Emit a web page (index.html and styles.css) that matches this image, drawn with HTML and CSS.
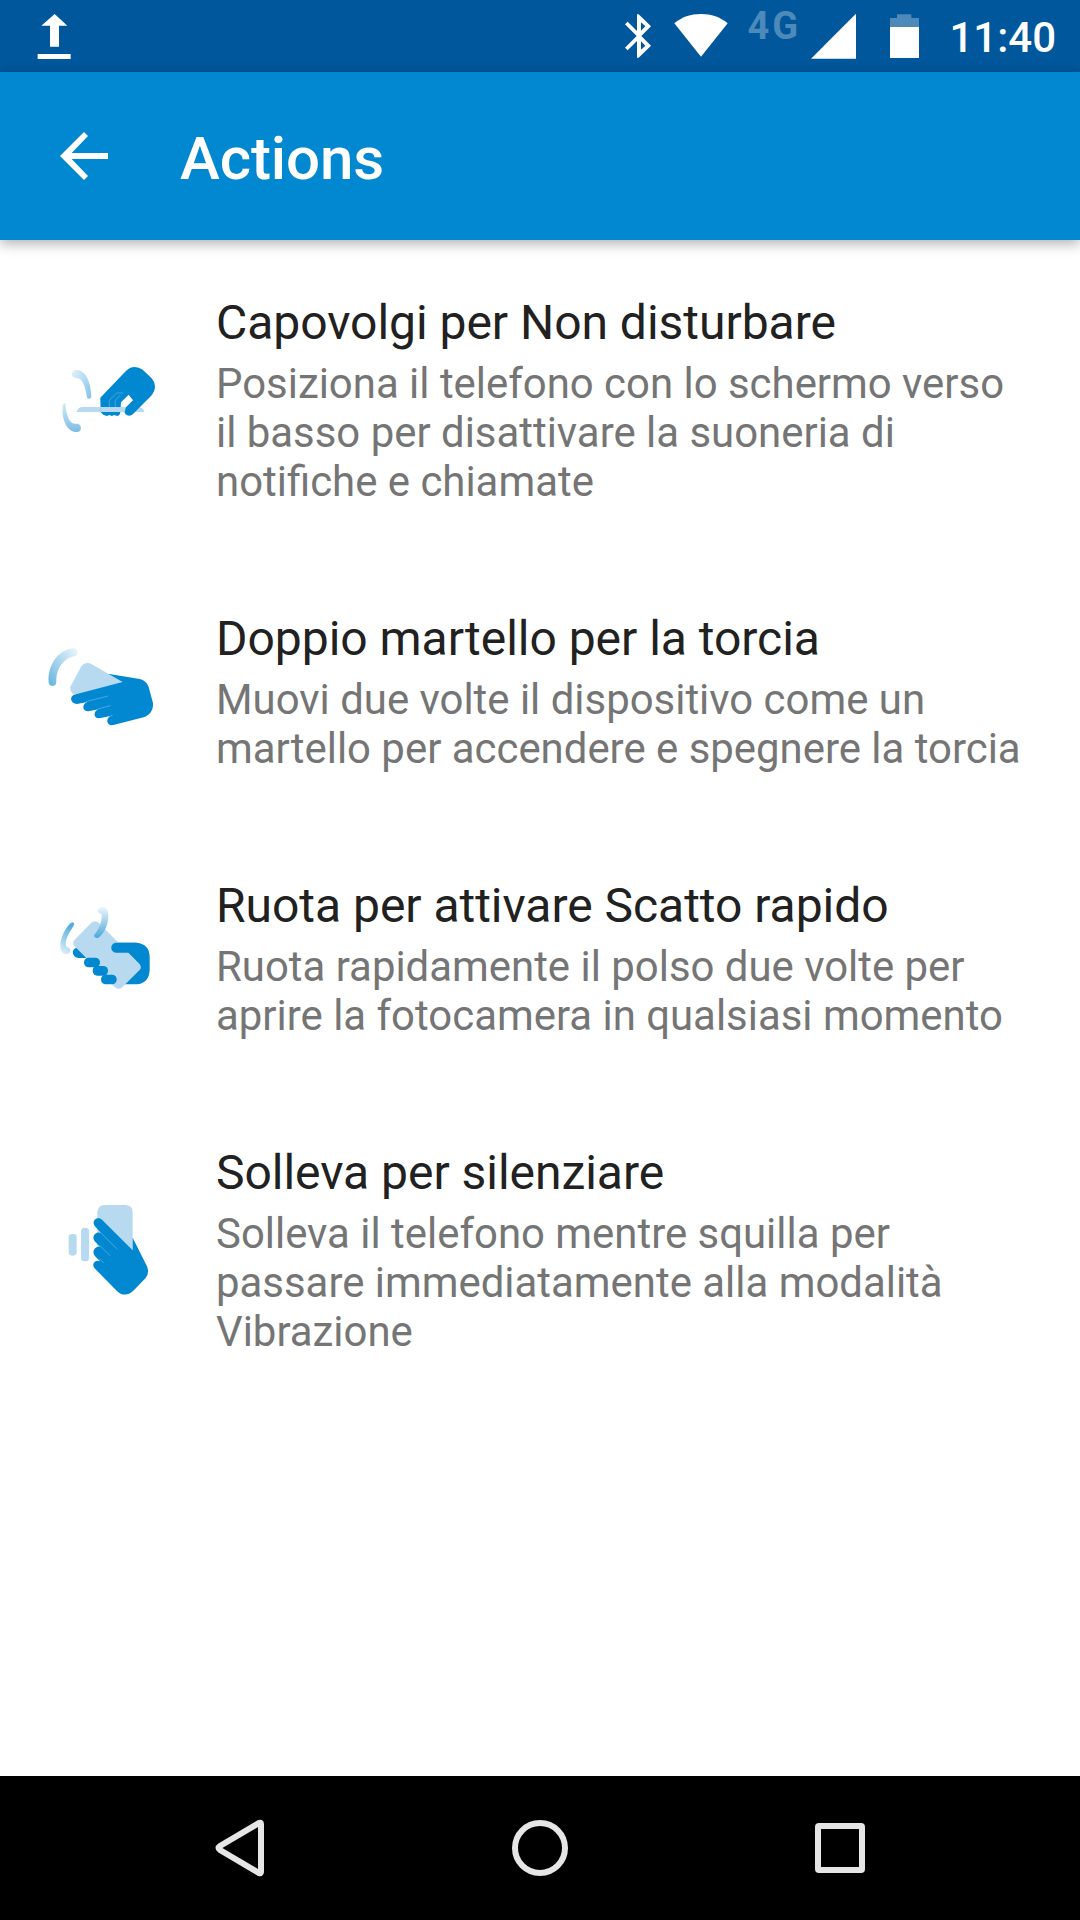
FILE: index.html
```html
<!DOCTYPE html>
<html lang="it">
<head>
    <meta charset="UTF-8">
    <meta name="viewport" content="width=device-width, initial-scale=1.0">
    <title>Actions</title>
    <link rel="stylesheet" href="styles.css">
</head>
<body>
    <div class="screen">
        <div class="status-bar">
            <svg class="upload" width="36" height="46" viewBox="0 0 108 138">
                <path d="M53 0l38 35H66v63H39V35H13zM2 120h99v15H2z"/>
            </svg>
            <div class="status-icons">
                <svg width="28" height="44" viewBox="0 0 84 132">
                    <path d="M39 1h5l37 36-29 29 29 29-37 36h-5V81L11 109l-8-8 35-35L3 31l8-8 28 28zM51 25v25l13-13zM51 82v25l13-12z"/>
                </svg>
                <svg class="wifi" width="54" height="44" viewBox="0 0 162 132">
                    <path d="M81 0c31 0 57 9 80 28L81 128 1 28C24 9 50 0 81 0z"/>
                </svg>
                <span class="network">4G</span>
                <svg class="signal" width="46" height="46" viewBox="0 0 138 138">
                    <path d="M0 134L135-1v135z"/>
                </svg>
                <svg class="battery" width="29" height="44" viewBox="0 0 87 132">
                    <path class="battery-empty" d="M0 12h21V1h43v11h23v27H0z"/>
                    <path d="M0 39h87v93H0z"/>
                </svg>
                <span class="clock">11:40</span>
            </div>
        </div>

        <header class="app-bar">
            <svg width="48" height="48" viewBox="0 0 144 144">
                <path d="M144 63v18H35l49 51-12 12L0 72 72 0l12 12-49 51z"/>
            </svg>
            <h1>Actions</h1>
        </header>

        <main class="actions">
            <div class="action">
                <svg class="action-icon" width="140" height="120" viewBox="0 0 420 360">
                    <defs>
                        <linearGradient id="flipTop" x1="0" y1="0" x2="1" y2="1">
                            <stop offset="0" stop-color="#e2f1fa"/>
                            <stop offset="1" stop-color="#83c1e7"/>
                        </linearGradient>
                        <linearGradient id="flipBottom" x1="0" y1="0" x2="0" y2="1">
                            <stop offset="0" stop-color="#d5eaf6"/>
                            <stop offset="1" stop-color="#7dbde4"/>
                        </linearGradient>
                    </defs>
                    <path fill="url(#flipTop)" d="M108 87c24-2 44 27 46 79q-1 8-7 8-7-1-7-9c-4-36-17-56-32-54-16 0-17-23 0-24z"/>
                    <path fill="url(#flipBottom)" d="M73 186q4 0 4 7c3 36 14 59 32 55 16-2 19 23 4 25-28 3-49-31-45-78q1-8 5-9z"/>
                    <path class="light" d="M110 213q4-15 18-15h166q16 0 19 15z"/>
                    <path class="hand" d="M181 170l76-79q12-13 27-13 13 0 24 8l27 26q10 11 10 24 0 15-12 29l-54 54c-13 13-33-2-24-17l24-24-13-17-23 23-2 29q-1 10-9 12l-10-3-6 3-8-3-7 3-10-3-9-8z"/>
                    <path class="light" d="M181 198h77l-4 15h-73z"/>
                    <path class="crease" d="M208 198v-20l22-22h19M226 198v-20l14-15"/>
                </svg>
                <div class="action-text">
                    <h2>Capovolgi per Non disturbare</h2>
                    <p>Posiziona il telefono con lo schermo verso il basso per disattivare la suoneria di notifiche e chiamate</p>
                </div>
            </div>

            <div class="action">
                <svg class="action-icon" width="140" height="120" viewBox="0 5 420 360">
                    <defs>
                        <linearGradient id="chop" x1="1" y1="0" x2="0" y2="1">
                            <stop offset="0" stop-color="#f0f8fc"/>
                            <stop offset="1" stop-color="#63b3e0"/>
                        </linearGradient>
                    </defs>
                    <path fill="url(#chop)" d="M98 54c18-3 20 20 5 24-31 5-55 36-54 78 0 15-23 15-23 0-4-50 27-96 72-102z"/>
                    <path class="hand" d="M208 131l91 15q20 4 27 24l13 48c2 21-11 38-28 43l-91 23c-19 4-25-17-9-27l-33 7c-18 1-19-20-3-27l-30 6c-18 0-21-21-3-28l-31 6c-22 0-23-26-5-29z"/>
                    <path class="light" d="M91 169l33-61q10-14 26-9l98 56-146 38q-13-9-11-24z"/>
                    <path class="crease" d="M138 214l66-17M173 236l39-10M208 258l10-3"/>
                </svg>
                <div class="action-text">
                    <h2>Doppio martello per la torcia</h2>
                    <p>Muovi due volte il dispositivo come un martello per accendere e spegnere la torcia</p>
                </div>
            </div>

            <div class="action">
                <svg class="action-icon" width="140" height="120" viewBox="0 27 420 360">
                    <defs>
                        <linearGradient id="twistLeft" x1="0" y1="1" x2="0.3" y2="0">
                            <stop offset="0" stop-color="#e8f4fb"/>
                            <stop offset="1" stop-color="#55ace0"/>
                        </linearGradient>
                        <linearGradient id="twistRight" x1="0" y1="0" x2="0" y2="1">
                            <stop offset="0" stop-color="#eef7fc"/>
                            <stop offset="1" stop-color="#4ba7dc"/>
                        </linearGradient>
                    </defs>
                    <path class="hand" d="M108 174h40v30h-34c-19-4-20-26-6-30zM228 158h62q38 4 39 42v40q-2 40-39 43h-40z"/>
                    <path class="light" d="M104 149l50-51q11-9 22 0l122 123q9 11 0 20l-51 51q-10 9-22 0L104 169q-9-10 0-20z"/>
                    <path class="hand" d="M228 158h62v30h-62c-19-2-19-28 0-30z"/>
                    <rect class="hand" x="132" y="203" width="48" height="29" rx="14"/>
                    <rect class="hand" x="158" y="228" width="46" height="29" rx="14"/>
                    <rect class="hand" x="183" y="254" width="47" height="29" rx="14"/>
                    <path fill="url(#twistLeft)" d="M97 97q9 2 4 10c-19 28-28 48-21 64 20 6 10 25-6 21-22-8-16-57 17-92z"/>
                    <path fill="url(#twistRight)" d="M177 54c12-9 28 0 28 20 1 32-15 59-31 70q-11 1-12-8c14-19 27-43 22-65-10-1-14-8-7-17z"/>
                </svg>
                <div class="action-text">
                    <h2>Ruota per attivare Scatto rapido</h2>
                    <p>Ruota rapidamente il polso due volte per aprire la fotocamera in qualsiasi momento</p>
                </div>
            </div>

            <div class="action">
                <svg class="action-icon" width="140" height="120" viewBox="0 2 420 360">
                    <rect class="light" x="86" y="131" width="24" height="65" rx="10"/>
                    <rect class="light" x="123" y="112" width="24" height="101" rx="11"/>
                    <path class="light" d="M172 66q1-20 20-22h66q19 2 20 20v117H172z"/>
                    <path class="hand" d="M186 88l92 92v-38l43 86q8 20-4 35l-34 35q-27 28-53 3l-67-68c-10-14 5-27 17-20l-16-17c-10-13 2-31 17-26l-17-17c-11-15 4-32 19-25l-19-21c-11-17 9-31 22-19z"/>
                    <path class="crease" d="M180 125l52 52M178 164l33 33M178 205l12 12"/>
                </svg>
                <div class="action-text">
                    <h2>Solleva per silenziare</h2>
                    <p>Solleva il telefono mentre squilla per passare immediatamente alla modalità Vibrazione</p>
                </div>
            </div>
        </main>

        <nav class="nav-bar">
            <svg width="60" height="60" viewBox="0 0 60 60">
                <path d="M51 6v48q0 2-2 1L10 32q-3-2 0-4L49 5q2-1 2 1z"/>
            </svg>
            <svg width="60" height="60" viewBox="0 0 60 60">
                <circle cx="30" cy="30" r="25"/>
            </svg>
            <svg width="60" height="60" viewBox="0 0 60 60">
                <rect x="8" y="8" width="44" height="44" rx="1"/>
            </svg>
        </nav>
    </div>
</body>
</html>
```

FILE: styles.css
```css
* { margin: 0; padding: 0; box-sizing: border-box; }
body {
    background: #fff;
    font-family: Roboto, sans-serif;
}
svg {
    display: block;
    flex-shrink: 0;
}
.screen {
    width: 1080px;
    height: 1920px;
    display: flex;
    flex-direction: column;
    overflow: hidden;
}

/* status bar */
.status-bar {
    height: 72px;
    padding: 14px 24px 0 37px;
    background: #01579b;
    color: #fff;
    display: flex;
    justify-content: space-between;
    align-items: flex-start;
}
.status-bar svg {
    fill: #fff;
}
.status-icons {
    display: flex;
    align-items: flex-start;
}
.wifi {
    margin-left: 22px;
}
.network {
    width: 50px;
    margin-left: 19px;
    margin-right: 1px;
    margin-top: -8px;
    font-size: 38px;
    font-weight: 700;
    line-height: 40px;
    letter-spacing: 3px;
    color: #4d89b9;
}
.signal {
    margin-left: 13px;
}
.status-bar .battery {
    margin-left: 33px;
}
.status-bar .battery-empty {
    fill: #4d89b9;
}
.clock {
    margin-left: 30px;
    font-size: 42px;
    font-weight: 500;
    line-height: 48px;
}

/* app bar */
.app-bar {
    height: 168px;
    flex-shrink: 0;
    padding-left: 60px;
    background: #0288d1;
    color: #fff;
    display: flex;
    align-items: center;
    gap: 72px;
    box-shadow: 0 4px 12px rgba(0, 0, 0, 0.3);
}
.app-bar svg {
    fill: #fff;
}
.app-bar h1 {
    font-size: 60px;
    font-weight: 500;
    line-height: 70px;
    letter-spacing: -0.1px;
    margin-top: 5px;
}

/* action list */
.actions {
    flex: 1;
    padding: 55px 48px 0 40px;
}
.action {
    display: flex;
    align-items: center;
    gap: 36px;
    margin-bottom: 105px;
}
.action-text h2 {
    color: #212121;
    font-size: 48px;
    font-weight: 400;
    line-height: 56px;
    letter-spacing: -0.03px;
    margin-bottom: 8px;
}
.action-text p {
    color: #757575;
    font-size: 41.92px;
    line-height: 49px;
}
.hand {
    fill: #0288d1;
}
.light {
    fill: #b8daf0;
}
.crease {
    fill: none;
    stroke: #6bb5e2;
    stroke-width: 2;
}

/* navigation bar */
.nav-bar {
    height: 144px;
    background: #000;
    display: flex;
    justify-content: center;
    align-items: center;
    gap: 240px;
}
.nav-bar svg {
    fill: none;
    stroke: #e6e6e6;
    stroke-width: 6;
}
```
